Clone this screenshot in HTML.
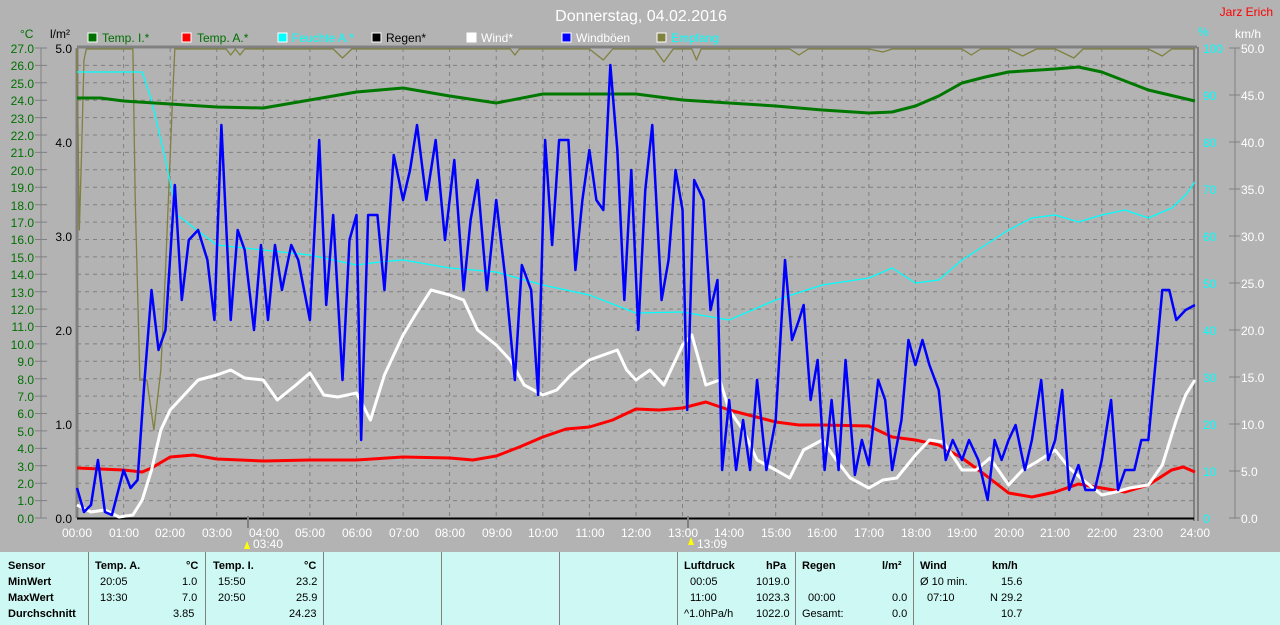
<!DOCTYPE html>
<html><head><meta charset="utf-8"><style>
body{margin:0;width:1280px;height:625px;background:#b3b3b3;overflow:hidden;font-family:"Liberation Sans",sans-serif}
svg{position:absolute;left:0;top:0}
.tb{position:absolute;left:0;top:552px;width:1280px;height:73px;background:#cdf8f3}
.tb div{position:absolute;font-size:11px;color:#000;white-space:nowrap}
.b{font-weight:bold}
.sep{position:absolute;top:0;width:1px;height:73px;background:#808080}
</style></head><body>
<svg width="1280" height="552" font-family="Liberation Sans, sans-serif">
<text x="641" y="21" fill="#fff" font-size="16" text-anchor="middle">Donnerstag, 04.02.2016</text>
<text x="1273" y="16" fill="#f00" font-size="12" text-anchor="end">Jarz Erich</text>
<text x="20" y="38" fill="#007000" font-size="12">°C</text>
<text x="50" y="38" fill="#000" font-size="12">l/m²</text>
<text x="1198" y="36" fill="#0ff" font-size="12">%</text>
<text x="1235" y="38" fill="#fff" font-size="12">km/h</text>
<g font-size="12">
<rect x="88" y="33" width="9" height="9" fill="#007000" stroke="#fff"/><text x="102" y="42" fill="#007000">Temp. I.*</text>
<rect x="182" y="33" width="9" height="9" fill="#f00" stroke="#fff"/><text x="197" y="42" fill="#007000">Temp. A.*</text>
<rect x="278" y="33" width="9" height="9" fill="#0ff" stroke="#fff"/><text x="292" y="42" fill="#0ff">Feuchte A.*</text>
<rect x="372" y="33" width="9" height="9" fill="#000" stroke="#fff"/><text x="386" y="42" fill="#000">Regen*</text>
<rect x="467" y="33" width="9" height="9" fill="#fff" stroke="#fff"/><text x="481" y="42" fill="#fff">Wind*</text>
<rect x="562" y="33" width="9" height="9" fill="#00f" stroke="#fff"/><text x="576" y="42" fill="#fff">Windböen</text>
<rect x="657" y="33" width="9" height="9" fill="#808040" stroke="#fff"/><text x="671" y="42" fill="#0ff">Empfang</text>
</g>
<!-- grid -->
<g stroke="#808080" stroke-dasharray="4,4" stroke-width="1">
<path d="M77 65.4H1194M77 82.8H1194M77 100.2H1194M77 117.6H1194M77 135H1194M77 152.4H1194M77 169.8H1194M77 187.2H1194M77 204.7H1194M77 222.1H1194M77 239.5H1194M77 256.9H1194M77 274.3H1194M77 291.7H1194M77 309.1H1194M77 326.5H1194M77 343.9H1194M77 361.3H1194M77 378.7H1194M77 396.1H1194M77 413.5H1194M77 430.9H1194M77 448.4H1194M77 465.8H1194M77 483.2H1194M77 500.6H1194"/>
<path d="M123.6 48V518M170.2 48V518M216.7 48V518M263.3 48V518M309.9 48V518M356.5 48V518M403.1 48V518M449.6 48V518M496.2 48V518M542.8 48V518M589.4 48V518M636 48V518M682.5 48V518M729.1 48V518M775.7 48V518M822.3 48V518M868.9 48V518M915.4 48V518M962 48V518M1008.6 48V518M1055.2 48V518M1101.8 48V518M1148.3 48V518"/>
</g>
<path d="M77 48V518" stroke="#808080" stroke-width="3"/>
<path d="M77 47H1197" stroke="#808080" stroke-width="3"/>
<path d="M1194 47V521M1198 47V521" stroke="#808080" stroke-width="2"/>
<path d="M77 518.5H1194" stroke="#000" stroke-width="2"/>
<!-- left axis -->
<g stroke="#808080"><path d="M41 48V518"/><path d="M35 48H47M35 65.4H47M35 82.8H47M35 100.2H47M35 117.6H47M35 135H47M35 152.4H47M35 169.8H47M35 187.2H47M35 204.7H47M35 222.1H47M35 239.5H47M35 256.9H47M35 274.3H47M35 291.7H47M35 309.1H47M35 326.5H47M35 343.9H47M35 361.3H47M35 378.7H47M35 396.1H47M35 413.5H47M35 430.9H47M35 448.4H47M35 465.8H47M35 483.2H47M35 500.6H47M35 518H47"/>
<path d="M1235 48V518M1229 48H1240M1229 95H1240M1229 142H1240M1229 189H1240M1229 236H1240M1229 283H1240M1229 330H1240M1229 377H1240M1229 424H1240M1229 471H1240M1229 518H1240"/></g>
<g font-size="12" fill="#007000" text-anchor="end">
<text x="34" y="53">27.0</text><text x="34" y="70">26.0</text><text x="34" y="88">25.0</text><text x="34" y="105">24.0</text><text x="34" y="123">23.0</text><text x="34" y="140">22.0</text><text x="34" y="157">21.0</text><text x="34" y="175">20.0</text><text x="34" y="192">19.0</text><text x="34" y="210">18.0</text><text x="34" y="227">17.0</text><text x="34" y="244">16.0</text><text x="34" y="262">15.0</text><text x="34" y="279">14.0</text><text x="34" y="297">13.0</text><text x="34" y="314">12.0</text><text x="34" y="331">11.0</text><text x="34" y="349">10.0</text><text x="34" y="366">9.0</text><text x="34" y="384">8.0</text><text x="34" y="401">7.0</text><text x="34" y="418">6.0</text><text x="34" y="436">5.0</text><text x="34" y="453">4.0</text><text x="34" y="471">3.0</text><text x="34" y="488">2.0</text><text x="34" y="505">1.0</text><text x="34" y="523">0.0</text>
</g>
<g font-size="12" fill="#000" text-anchor="end">
<text x="72" y="53">5.0</text><text x="72" y="147">4.0</text><text x="72" y="241">3.0</text><text x="72" y="335">2.0</text><text x="72" y="429">1.0</text><text x="72" y="523">0.0</text></g>
<g font-size="12" fill="#0ff">
<text x="1203" y="53">100</text><text x="1203" y="100">90</text><text x="1203" y="147">80</text><text x="1203" y="194">70</text><text x="1203" y="241">60</text><text x="1203" y="288">50</text><text x="1203" y="335">40</text><text x="1203" y="382">30</text><text x="1203" y="429">20</text><text x="1203" y="476">10</text><text x="1203" y="523">0</text></g>
<g font-size="12" fill="#fff">
<text x="1241" y="53">50.0</text><text x="1241" y="100">45.0</text><text x="1241" y="147">40.0</text><text x="1241" y="194">35.0</text><text x="1241" y="241">30.0</text><text x="1241" y="288">25.0</text><text x="1241" y="335">20.0</text><text x="1241" y="382">15.0</text><text x="1241" y="429">10.0</text><text x="1241" y="476">5.0</text><text x="1241" y="523">0.0</text></g>
<g font-size="12" fill="#fff" text-anchor="middle">
<text x="77" y="537">00:00</text><text x="124" y="537">01:00</text><text x="170" y="537">02:00</text><text x="217" y="537">03:00</text><text x="264" y="537">04:00</text><text x="310" y="537">05:00</text><text x="357" y="537">06:00</text><text x="404" y="537">07:00</text><text x="450" y="537">08:00</text><text x="497" y="537">09:00</text><text x="543" y="537">10:00</text><text x="590" y="537">11:00</text><text x="636" y="537">12:00</text><text x="683" y="537">13:00</text><text x="729" y="537">14:00</text><text x="776" y="537">15:00</text><text x="822" y="537">16:00</text><text x="869" y="537">17:00</text><text x="916" y="537">18:00</text><text x="962" y="537">19:00</text><text x="1009" y="537">20:00</text><text x="1055" y="537">21:00</text><text x="1102" y="537">22:00</text><text x="1148" y="537">23:00</text><text x="1195" y="537">24:00</text>
<text x="268" y="548">03:40</text><text x="712" y="548">13:09</text></g>
<path d="M248 516V528M688 516V528" stroke="#808080" stroke-width="2"/>
<path d="M247 541l3 8h-6z" fill="#ff0"/><path d="M691 537l3 8h-6z" fill="#ff0"/>
<!-- data -->
<g transform="translate(77,0) scale(46.58,1)" fill="none" stroke-linejoin="round">
<polyline vector-effect="non-scaling-stroke" stroke="#808040" stroke-width="1.3" points="0,49 0.05,230 0.1,150 0.15,60 0.2,49 1.2,49 1.25,200 1.35,380 1.5,380 1.65,430 1.8,370 1.9,270 2.05,100 2.1,49 3.2,49 3.3,55 3.4,49 3.5,55 3.6,49 5.5,49 5.7,58 5.9,49 9.3,49 9.4,55 9.5,49 11,49 11.3,60 11.5,49 12.4,49 12.6,62 12.8,49 13.2,49 13.3,60 13.4,49 15.3,49 15.5,55 15.7,49 17,49 17.3,52 17.5,49 19,49 19.2,55 19.4,49 20,49 20.3,56 20.6,49 21,49 21.4,58 21.6,49 23,49 23.3,56 23.5,49 24,49"/>
<polyline vector-effect="non-scaling-stroke" stroke="#0ff" stroke-width="1.3" points="0,72 1.4,72 1.6,100 1.9,160 2.15,215 3,245 5,255 6,265 6.5,262 7,260 8,268 9,272 10,285 11,295 12,313 13,312 14,320 15,300 16,285 17,278 17.5,268 18,283 18.5,280 19,260 19.5,245 20,230 20.5,218 21,215 21.5,222 22,215 22.5,210 23,218 23.5,208 23.8,195 24,182"/>
<polyline vector-effect="non-scaling-stroke" stroke="#007800" stroke-width="3" points="0,98 0.5,98 1,101 2,104 3,107 4,108 5,100 6,92 7,88 8,96 9,103 10,94 11,94 12,94 13,100 14,103 15,106 16,110 17,113 17.5,112 18,106 18.5,96 19,83 19.5,77 20,72 21,69 21.5,67 22,72 23,90 24,101"/>
<polyline vector-effect="non-scaling-stroke" stroke="#f00" stroke-width="3" points="0,468 1,470 1.4,472 1.6,468 2,457 2.5,455 3,459 4,461 5,460 6,460 7,457 8,458 8.5,460 9,456 9.5,447 10,437 10.5,429 11,427 11.5,420 12,409 12.5,410 13,408 13.5,402 14,410 14.5,416 15,422 15.5,425 16,425 17,426 17.5,437 18,440 18.5,445 19,458 19.5,475 20,493 20.5,497 21,492 21.5,484 22,488 22.5,492 23,485 23.5,470 23.75,467 24,472"/>
<polyline vector-effect="non-scaling-stroke" stroke="#fff" stroke-width="3" points="0,505 0.3,512 0.6,510 0.9,517 1.2,515 1.4,500 1.6,470 1.8,430 2,410 2.3,395 2.6,380 3,375 3.3,370 3.6,378 4,380 4.3,400 4.7,385 5,373 5.3,395 5.6,397 6,393 6.3,420 6.6,375 7,335 7.3,312 7.6,290 8,295 8.3,300 8.6,330 9,345 9.3,360 9.6,385 10,395 10.3,390 10.6,375 11,360 11.3,355 11.6,350 11.8,370 12,380 12.3,370 12.6,385 13,345 13.2,335 13.5,385 13.8,380 14,410 14.3,430 14.6,460 15,470 15.3,478 15.6,450 16,440 16.3,460 16.6,478 17,488 17.3,480 17.6,478 18,455 18.3,440 18.6,442 19,470 19.3,470 19.6,458 20,485 20.3,470 20.6,462 21,450 21.3,468 21.6,480 22,495 22.3,492 22.6,488 23,485 23.3,465 23.6,420 23.8,395 24,380"/>
<polyline vector-effect="non-scaling-stroke" stroke="#00f" stroke-width="2.5" points="0,488 0.15,512 0.3,505 0.45,460 0.6,512 0.75,515 1,470 1.15,488 1.3,480 1.45,380 1.6,290 1.75,350 1.9,330 2.1,185 2.25,300 2.4,240 2.6,230 2.8,260 2.95,320 3.1,125 3.3,320 3.45,230 3.6,250 3.8,330 3.95,245 4.1,320 4.25,245 4.4,290 4.6,245 4.75,260 5,320 5.2,140 5.35,305 5.5,215 5.7,380 5.85,240 6,215 6.1,440 6.25,215 6.45,215 6.6,290 6.8,155 7,200 7.15,170 7.3,125 7.5,200 7.7,140 7.9,240 8.1,160 8.3,290 8.45,220 8.6,180 8.8,290 9,200 9.2,280 9.4,380 9.55,265 9.75,290 9.9,395 10.05,140 10.2,245 10.35,140 10.55,140 10.7,270 10.85,200 11,150 11.15,200 11.3,210 11.45,65 11.6,150 11.75,300 11.9,170 12.05,330 12.2,190 12.35,125 12.55,300 12.7,260 12.85,170 13,210 13.1,410 13.25,180 13.45,200 13.6,310 13.75,280 13.85,470 14,400 14.15,470 14.3,420 14.45,470 14.6,380 14.8,470 15,420 15.2,260 15.35,340 15.5,320 15.6,305 15.75,400 15.9,360 16.05,470 16.2,400 16.35,470 16.5,360 16.7,475 16.85,440 17,465 17.2,380 17.35,400 17.5,470 17.7,420 17.85,340 18,365 18.15,340 18.3,365 18.5,390 18.65,460 18.8,440 19,460 19.15,440 19.35,460 19.55,500 19.7,440 19.85,460 20,440 20.15,425 20.35,470 20.5,440 20.7,380 20.85,460 21,440 21.15,390 21.3,490 21.5,465 21.65,490 21.85,490 22,460 22.2,400 22.35,490 22.5,470 22.7,470 22.85,440 23,440 23.15,365 23.3,290 23.45,290 23.6,320 23.8,310 24,305"/>
</g>
</svg>
<div class="tb">
<div class="sep" style="left:88px"></div><div class="sep" style="left:205px"></div><div class="sep" style="left:323px"></div><div class="sep" style="left:441px"></div><div class="sep" style="left:559px"></div><div class="sep" style="left:677px"></div><div class="sep" style="left:795px"></div><div class="sep" style="left:913px"></div>
<div class="b" style="left:8px;top:8px">Sensor</div><div class="b" style="left:8px;top:24px">MinWert</div><div class="b" style="left:8px;top:40px">MaxWert</div><div class="b" style="left:8px;top:56px">Durchschnitt</div>
<div class="b" style="left:95px;top:8px">Temp. A.</div><div class="b" style="left:186px;top:8px">°C</div>
<div style="left:100px;top:24px">20:05</div><div style="left:182px;top:24px">1.0</div>
<div style="left:100px;top:40px">13:30</div><div style="left:182px;top:40px">7.0</div>
<div style="left:173px;top:56px">3.85</div>
<div class="b" style="left:213px;top:8px">Temp. I.</div><div class="b" style="left:304px;top:8px">°C</div>
<div style="left:218px;top:24px">15:50</div><div style="left:296px;top:24px">23.2</div>
<div style="left:218px;top:40px">20:50</div><div style="left:296px;top:40px">25.9</div>
<div style="left:289px;top:56px">24.23</div>
<div class="b" style="left:684px;top:8px">Luftdruck</div><div class="b" style="left:766px;top:8px">hPa</div>
<div style="left:690px;top:24px">00:05</div><div style="left:756px;top:24px">1019.0</div>
<div style="left:690px;top:40px">11:00</div><div style="left:756px;top:40px">1023.3</div>
<div style="left:684px;top:56px">^1.0hPa/h</div><div style="left:756px;top:56px">1022.0</div>
<div class="b" style="left:802px;top:8px">Regen</div><div class="b" style="left:882px;top:8px">l/m²</div>
<div style="left:808px;top:40px">00:00</div><div style="left:892px;top:40px">0.0</div>
<div style="left:802px;top:56px">Gesamt:</div><div style="left:892px;top:56px">0.0</div>
<div class="b" style="left:920px;top:8px">Wind</div><div class="b" style="left:992px;top:8px">km/h</div>
<div style="left:920px;top:24px">Ø 10 min.</div><div style="left:1001px;top:24px">15.6</div>
<div style="left:927px;top:40px">07:10</div><div style="left:990px;top:40px">N 29.2</div>
<div style="left:1001px;top:56px">10.7</div>
</div>
</body></html>
